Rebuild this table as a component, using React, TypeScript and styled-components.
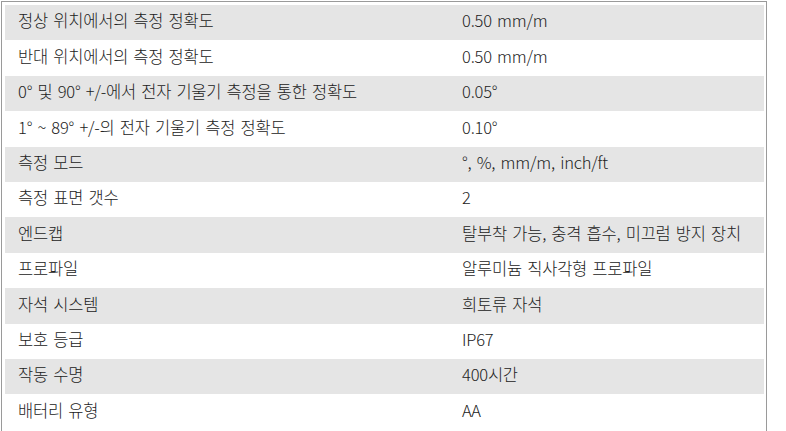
import styled, { createGlobalStyle } from "styled-components"

const GlobalStyle = createGlobalStyle`
  html, body {
    margin: 0;
    padding: 0;
    background: #ffffff;
  }
  body {
    font-family: "Noto Sans CJK KR", "Noto Sans", sans-serif;
    color: #222;
  }
`;

const SpecTable = styled.div`
  box-sizing: border-box;
  width: 766px;
  margin: 1px 0 0 1px;
  padding: 3px 2px 2px 3px;
  border: 1px solid #9a9a9a;
`;

const SpecRow = styled.div<{ $shaded: boolean }>`
  display: grid;
  grid-template-columns: 444px 1fr;
  align-items: center;
  height: 35.4px;
  background: ${(p) => (p.$shaded ? "#e5e5e5" : "#ffffff")};
`;

const Cell = styled.div`
  padding: 0 13px;
  font-size: 16.5px;
  font-weight: 300;
  line-height: 1;
  margin-top: -4px;
  white-space: nowrap;
  letter-spacing: -0.2px;
  word-spacing: 1.8px;
`;

const specs: [string, string][] = [
  ["정상 위치에서의 측정 정확도", "0.50 mm/m"],
  ["반대 위치에서의 측정 정확도", "0.50 mm/m"],
  ["0° 및 90° +/-에서 전자 기울기 측정을 통한 정확도", "0.05°"],
  ["1° ~ 89° +/-의 전자 기울기 측정 정확도", "0.10°"],
  ["측정 모드", "°, %, mm/m, inch/ft"],
  ["측정 표면 갯수", "2"],
  ["엔드캡", "탈부착 가능, 충격 흡수, 미끄럼 방지 장치"],
  ["프로파일", "알루미늄 직사각형 프로파일"],
  ["자석 시스템", "희토류 자석"],
  ["보호 등급", "IP67"],
  ["작동 수명", "400시간"],
  ["배터리 유형", "AA"],
];

const App = () => {
  return (
    <>
      <GlobalStyle />
      <SpecTable>
        {specs.map(([label, value], i) => (
          <SpecRow key={i} $shaded={i % 2 === 0}>
            <Cell>{label}</Cell>
            <Cell>{value}</Cell>
          </SpecRow>
        ))}
      </SpecTable>
    </>
  )
}

export default App
